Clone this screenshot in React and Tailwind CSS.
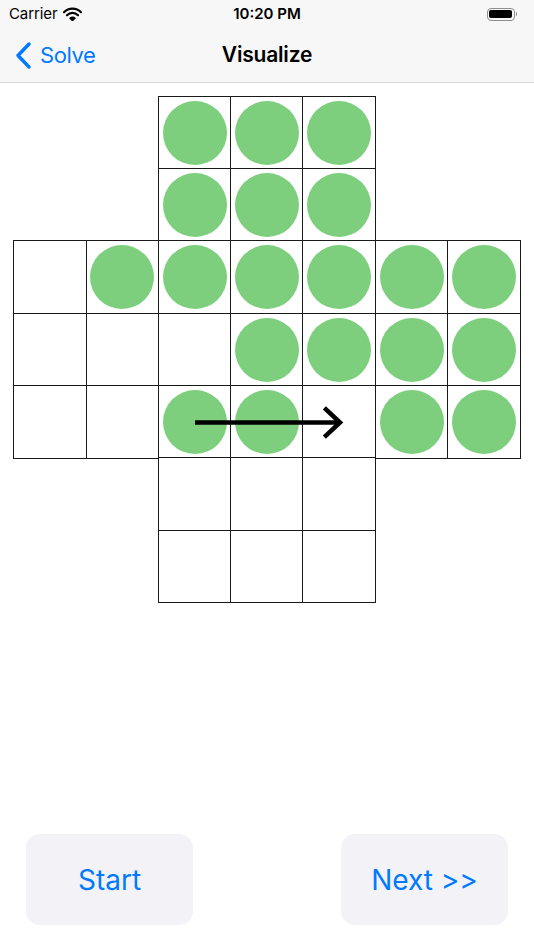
import React from "react";

const BLUE = "text-[#007aff]";

// 0 = no cell, 1 = empty cell, 2 = cell with a peg
const board = [
  [0, 0, 2, 2, 2, 0, 0],
  [0, 0, 2, 2, 2, 0, 0],
  [1, 2, 2, 2, 2, 2, 2],
  [1, 1, 1, 2, 2, 2, 2],
  [1, 1, 2, 2, 1, 2, 2],
  [0, 0, 1, 1, 1, 0, 0],
  [0, 0, 1, 1, 1, 0, 0],
];

function StatusBar() {
  return (
    <div className="relative flex h-[28px] items-center px-[9px] text-[15px] text-black">
      <div className="flex items-center gap-[6px]">
        <span className="tracking-[-0.1px]">Carrier</span>
        <svg width="19" height="14" viewBox="0 0 19 14">
          <path d="M1 5.2a12 12 0 0 1 17 0" fill="none" stroke="#000" strokeWidth="2.2" strokeLinecap="round" />
          <path d="M4 8.3a7.6 7.6 0 0 1 11 0" fill="none" stroke="#000" strokeWidth="2.2" strokeLinecap="round" />
          <path d="M7 11.2a3.4 3.4 0 0 1 5 0L9.5 13.6z" fill="#000" stroke="#000" strokeWidth="1.4" strokeLinejoin="round" />
        </svg>
      </div>
      <div className="absolute left-1/2 top-0 flex h-[28px] -translate-x-1/2 items-center font-semibold">10:20 PM</div>
      <div className="ml-auto flex items-center pr-[8px]">
        <div className="flex h-[13px] w-[28px] items-center rounded-[4px] border border-[#8e8e8e] p-[1.5px]">
          <div className="h-full w-full rounded-[2px] bg-black" />
        </div>
        <div className="ml-[1px] h-[4px] w-[1.5px] rounded-r-sm bg-[#8e8e8e]" />
      </div>
    </div>
  );
}

function NavBar() {
  return (
    <div className="relative flex h-[55px] items-center border-b border-[#d6d6d6] px-[16px]">
      <div className={`flex items-center gap-[9px] ${BLUE}`}>
        <svg width="15" height="27" viewBox="0 0 15 27">
          <path d="M13 2L2 13.5 13 25" fill="none" stroke="#007aff" strokeWidth="3.4" strokeLinecap="round" strokeLinejoin="round" />
        </svg>
        <span className="text-[22px] leading-none tracking-[-0.4px]">Solve</span>
      </div>
      <div className="absolute left-1/2 top-0 flex h-full -translate-x-1/2 items-center text-[21px] font-semibold tracking-[-0.2px] text-black">
        Visualize
      </div>
    </div>
  );
}

function Board() {
  return (
    <div className="relative mx-auto grid w-[506px] grid-cols-7">
      {board.flat().map((v, i) =>
        v === 0 ? (
          <div key={i} className="aspect-square" />
        ) : (
          <div
            key={i}
            className="m-[-0.75px] flex aspect-square items-center justify-center border-[1.5px] border-[#1a1a1a] bg-white"
          >
            {v === 2 && <div className="h-[64px] w-[64px] rounded-full bg-[#7dcf7d]" />}
          </div>
        )
      )}
      <svg className="absolute left-0 top-0" width="506" height="506" viewBox="0 0 506 506">
        <path d="M181 325.5H326" stroke="#000" strokeWidth="4.5" fill="none" />
        <path d="M312 312.5L326 325.5 312 338.5" stroke="#000" strokeWidth="4.5" fill="none" strokeLinecap="square" />
      </svg>
    </div>
  );
}

export default function App() {
  return (
    <div className="flex h-[950px] w-[534px] flex-col bg-white" style={{ fontFamily: "Inter, 'Liberation Sans', sans-serif" }}>
      <div className="bg-[#f7f7f7]">
        <StatusBar />
        <NavBar />
      </div>
      <div className="pt-[13.5px]">
        <Board />
      </div>
      <div className="flex-1" />
      <div className="flex justify-between px-[26px] pb-[25px]">
        <button className={`h-[91px] w-[167px] rounded-[14px] bg-[#f2f2f7] text-[28px] ${BLUE}`}>Start</button>
        <button className={`h-[91px] w-[167px] rounded-[14px] bg-[#f2f2f7] text-[28px] ${BLUE}`}>Next &gt;&gt;</button>
      </div>
    </div>
  );
}
